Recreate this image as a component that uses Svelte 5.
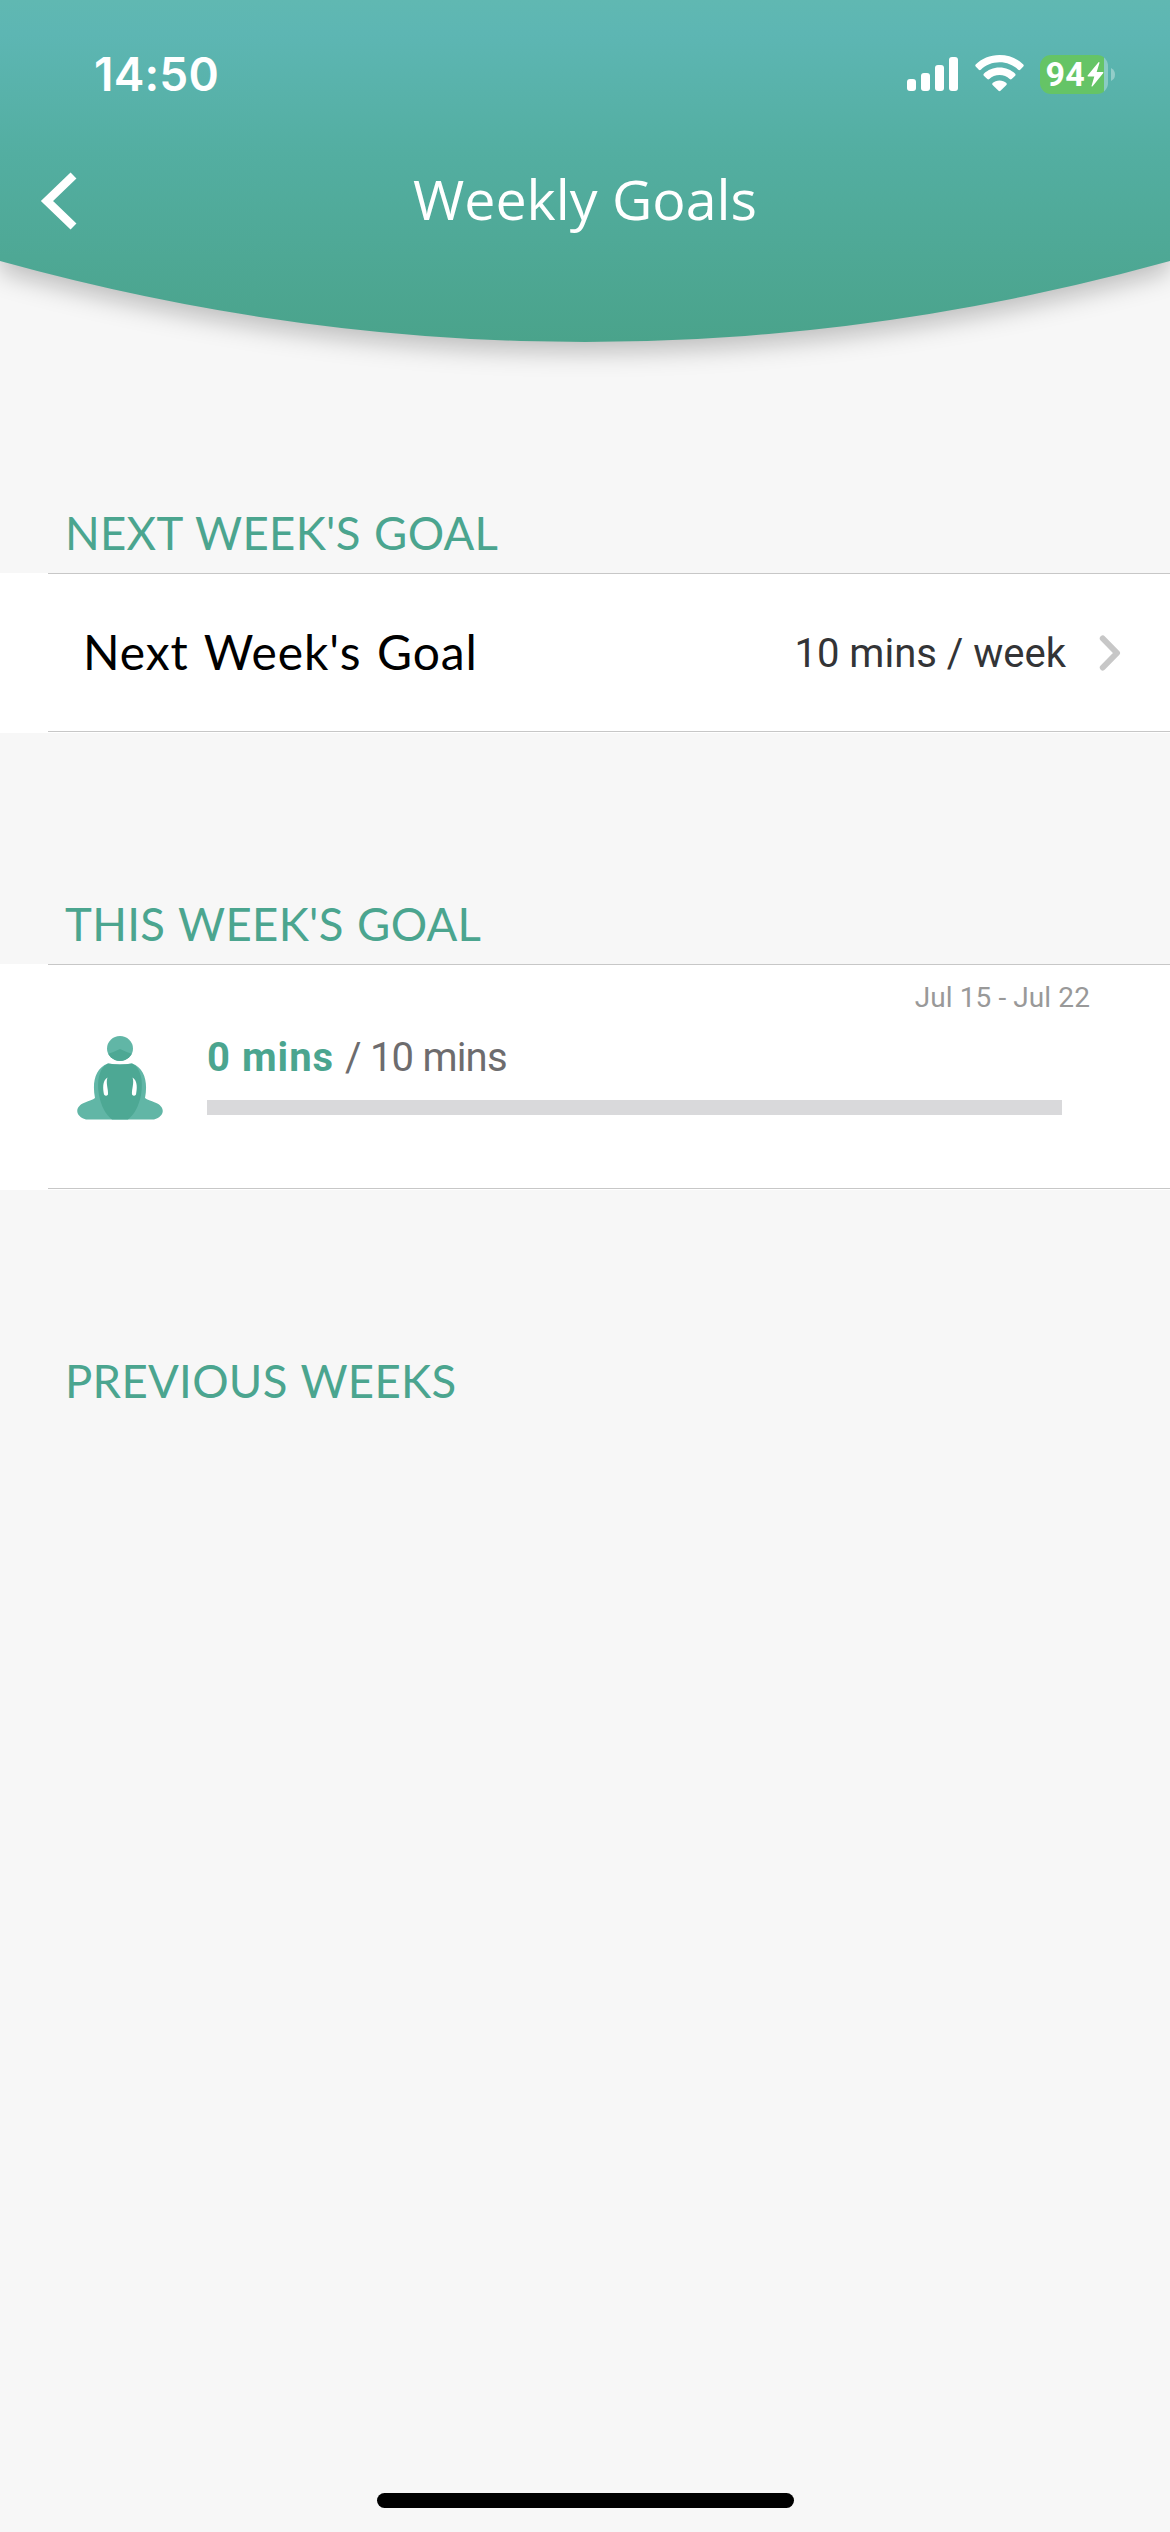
<script>
  // Signal strength bars, left to right
  const bars = [12, 18, 26, 34];

  const nextGoal = { label: "Next Week's Goal", value: '10 mins / week' };

  const thisWeek = {
    dates: 'Jul 15 - Jul 22',
    done: 0,
    target: 10,
  };

  $: progress = (thisWeek.done / thisWeek.target) * 100;
</script>

<div class="screen">
  <header>
    <svg class="header-bg" viewBox="0 0 1170 400">
      <defs>
        <linearGradient id="teal" x1="0" y1="0" x2="0" y2="1">
          <stop offset="0" stop-color="#60b8b2" />
          <stop offset="0.1" stop-color="#5db6b3" />
          <stop offset="0.45" stop-color="#53aea1" />
          <stop offset="1" stop-color="#4aa38b" />
        </linearGradient>
      </defs>
      <path d="M0 0H1170V261Q585 423 0 261Z" fill="url(#teal)" />
    </svg>

    <div class="status-bar">
      <span class="time">14:50</span>
      <div class="status-icons">
        <div class="signal">
          {#each bars as height}
            <i style="height: {height}px"></i>
          {/each}
        </div>
        <svg class="wifi" width="49" height="37" viewBox="0 0 49 37">
          <g fill="#fff">
            <path d="M24.5 0C34 0 42.5 3.6 48.3 9.6Q49.2 10.6 48.3 11.6L45.2 14.7Q44.2 15.6 43.2 14.7C38.3 10 31.7 7.3 24.5 7.3S10.7 10 5.8 14.7Q4.8 15.6 3.8 14.7L.7 11.6Q-.2 10.6 .7 9.6C6.5 3.6 15 0 24.5 0Z" />
            <path d="M24.5 12.5C30.7 12.5 36.2 14.9 40.2 18.7Q41.1 19.7 40.2 20.7L36.7 24Q35.7 24.9 34.7 24C32 21.5 28.5 20 24.5 20S17 21.5 14.3 24Q13.3 24.9 12.3 24L8.8 20.7Q7.9 19.7 8.8 18.7C12.8 14.9 18.3 12.5 24.5 12.5Z" />
            <path d="M24.5 25.5C27.2 25.5 29.6 26.4 31.4 28Q32.3 28.9 31.4 29.9L25.5 35.8Q24.5 36.7 23.5 35.8L17.6 29.9Q16.7 28.9 17.6 28C19.4 26.4 21.8 25.5 24.5 25.5Z" />
          </g>
        </svg>
        <div class="battery">
          <span>94</span>
          <svg width="17" height="25" viewBox="0 0 17 25">
            <path d="M11.5 .3L.6 13.6Q.2 14.5 1.2 14.5H7.3L4.5 24Q4.7 25 5.6 24.3L16.3 11Q16.7 10.1 15.8 10.1H9.7L12.5 .8Q12.3-.3 11.5 .3Z" fill="#fff" />
          </svg>
        </div>
        <svg class="battery-tip" width="4" height="13" viewBox="0 0 4 13">
          <path d="M0 0Q4 2 4 6.5T0 13Z" fill="#fff" opacity="0.35" />
        </svg>
      </div>
    </div>

    <div class="nav">
      <svg class="back" width="40" height="60" viewBox="0 0 40 60">
        <path d="M33.5 4.5L7 30L33.5 55.5" fill="none" stroke="#fff" stroke-width="8.5" />
      </svg>
      <h1>Weekly Goals</h1>
    </div>
  </header>

  <main>
    <h2>NEXT WEEK'S GOAL</h2>
    <div class="row next">
      <span class="label">{nextGoal.label}</span>
      <span class="value">{nextGoal.value}</span>
      <svg class="chevron" width="22" height="38" viewBox="0 0 22 38">
        <path d="M3.8 4.5L18 19L3.8 33.5" fill="none" stroke="#c7c7c7" stroke-width="6" stroke-linecap="round" stroke-linejoin="round" />
      </svg>
    </div>

    <h2>THIS WEEK'S GOAL</h2>
    <div class="row this">
      <svg class="person" width="86" height="84" viewBox="0 0 86 84">
        <defs>
          <clipPath id="head"><ellipse cx="43" cy="12.5" rx="13" ry="12.5" /></clipPath>
        </defs>
        <ellipse cx="43" cy="12.5" rx="13" ry="12.5" fill="#61b6a6" />
        <path d="M28 19Q37 16 43 13Q49 16 58 19V26H28Z" fill="#4da894" clip-path="url(#head)" />
        <path d="M9 83.5C-3 80 -2 70 8 66.5C12 64.5 16 64 18 62C15 47 18 32 31 27.5Q43 29.5 55 27.5C68 32 71 47 68 62C70 64 74 64.5 78 66.5C88 70 89 80 77 83.5Z" fill="#61b6a6" />
        <path d="M31 27.5C22 32 19.5 45 22 59C24 70 29 79 35 83.5H51C57 79 62 70 64 59C66.5 45 64 32 55 27.5Q43 29.5 31 27.5Z" fill="#4da894" />
        <path d="M30.5 41.5C25 45 26 53 27 58.5Q29 61 31 58.5C31.5 53 28.5 47 30.5 41.5Z" fill="#fff" />
        <path d="M55.5 41.5C61 45 60 53 59 58.5Q57 61 55 58.5C54.5 53 57.5 47 55.5 41.5Z" fill="#fff" />
      </svg>
      <div class="goal">
        <div class="dates">{thisWeek.dates}</div>
        <div class="minutes">
          <b>{thisWeek.done} mins</b><span>/ {thisWeek.target} mins</span>
        </div>
        <div class="track">
          <div class="fill" style="width: {progress}%"></div>
        </div>
      </div>
    </div>

    <h2>PREVIOUS WEEKS</h2>
  </main>

  <div class="home-indicator"></div>
</div>

<style>
  :global(body) {
    background: #f7f7f7;
  }

  .screen {
    width: 1170px;
    height: 2532px;
    display: flex;
    flex-direction: column;
    overflow: hidden;
    background: #f7f7f7;
    font-family: Roboto, 'Liberation Sans', sans-serif;
  }

  header {
    position: relative;
    height: 342px;
    flex: none;
    color: #fff;
  }

  /* the curved backdrop lies behind the status bar and the title */
  .header-bg {
    position: absolute;
    top: 0;
    left: 0;
    width: 1170px;
    height: 400px;
    overflow: visible;
    filter: drop-shadow(0 10px 12px rgba(0, 0, 0, 0.23));
  }

  .status-bar {
    position: relative;
    display: flex;
    justify-content: space-between;
    height: 148px;
    padding: 0 55px 0 94px;
    align-items: center;
    box-sizing: border-box;
  }

  .time {
    font: 600 46px/56px Inter, sans-serif;
    letter-spacing: 0.2px;
  }

  .status-icons {
    display: flex;
    align-items: center;
  }

  .signal {
    display: flex;
    align-items: flex-end;
    gap: 5px;
    height: 34px;
    margin-right: 17px;
  }

  .signal i {
    width: 9px;
    border-radius: 3px;
    background: #fff;
  }

  .wifi {
    margin: -2px 16px 0 0;
  }

  .battery {
    display: flex;
    align-items: center;
    justify-content: flex-end;
    box-sizing: border-box;
    width: 68px;
    height: 39px;
    padding-right: 4px;
    border-radius: 11px;
    background: linear-gradient(to right, #65c466 64px, #8accc5 64px);
  }

  .battery span {
    font: 700 34px/39px Roboto, sans-serif;
    letter-spacing: 0.3px;
    margin-right: 2px;
  }

  .battery-tip {
    margin-left: 3px;
  }

  .nav {
    position: relative;
    display: flex;
    justify-content: center;
    height: 106px;
  }

  .back {
    position: absolute;
    left: 40px;
    top: 23px;
  }

  h1 {
    margin: 16px 0 0;
    font: 500 55.5px/70px 'Open Sans', sans-serif;
  }

  main {
    flex: 1;
  }

  h2 {
    margin: 163px 0 0;
    padding-left: 65px;
    height: 68px;
    font-family: Lato, sans-serif;
    font-size: 45.5px;
    line-height: 55px;
    font-weight: 400;
    letter-spacing: 0.3px;
    word-spacing: 1.5px;
    color: #4ba58f;
  }

  .row {
    display: flex;
    box-sizing: border-box;
    background:
      linear-gradient(#c7c7c7, #c7c7c7) 48px 0 / 100% 1px no-repeat,
      linear-gradient(#c7c7c7, #c7c7c7) 48px calc(100% - 1px) / 100% 1px no-repeat,
      #fff;
  }

  .next {
    height: 160px;
    align-items: center;
    padding: 0 49px 0 83px;
  }

  .label {
    flex: 1;
    padding-bottom: 3px;
    font-family: Lato, sans-serif;
    font-size: 48px;
    letter-spacing: 0.9px;
    word-spacing: 2.5px;
    color: #000;
  }

  .value {
    font-size: 40px;
    color: #333436;
  }

  .chevron {
    margin-left: 33px;
  }

  .this {
    height: 226px;
    padding: 0 80px 0 77px;
  }

  .person {
    margin-top: 72px;
  }

  .goal {
    flex: 1;
    margin-left: 44px;
  }

  .dates {
    margin-top: 16px;
    font-size: 28px;
    line-height: 36px;
    letter-spacing: 0.1px;
    color: #999;
    text-align: right;
  }

  .minutes {
    display: flex;
    gap: 11px;
    margin-top: 18px;
    font-size: 40px;
    line-height: 48px;
    letter-spacing: -0.8px;
    color: #6d6c6e;
  }

  .minutes b {
    letter-spacing: 1px;
    color: #4ba58f;
  }

  .track {
    width: 855px;
    height: 15px;
    margin-top: 18px;
    background: #d9d9db;
  }

  .fill {
    height: 100%;
    background: #4ba58f;
  }

  .home-indicator {
    width: 417px;
    height: 15px;
    margin: 0 auto 24px;
    border-radius: 8px;
    background: #000;
  }
</style>
